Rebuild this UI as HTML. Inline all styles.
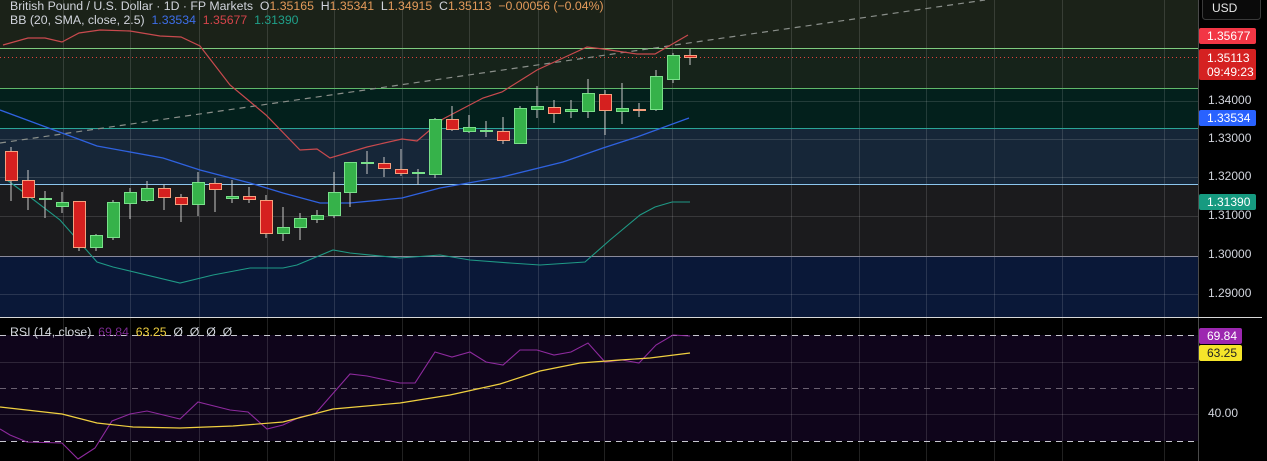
<!DOCTYPE html>
<html><head><meta charset="utf-8"><style>
html,body{margin:0;padding:0;background:#000;}
body{width:1267px;height:461px;overflow:hidden;position:relative;font-family:"Liberation Sans",sans-serif;}
svg{position:absolute;left:0;top:0;}
.lg{position:absolute;left:10px;font-size:12.3px;color:#d1d4dc;white-space:nowrap;}
.ax{position:absolute;left:1208px;font-size:12px;color:#d1d4dc;}
.bx{position:absolute;left:1199px;width:57px;font-size:12px;color:#fff;border-radius:2px;padding-left:8px;box-sizing:border-box;}
</style></head><body>
<svg width="1267" height="461" viewBox="0 0 1267 461">
<rect x="0" y="0" width="1198" height="48" fill="#1b2218"/>
<rect x="0" y="48" width="1198" height="40" fill="#16231a"/>
<rect x="0" y="88" width="1198" height="40" fill="#03201c"/>
<rect x="0" y="128" width="1198" height="56" fill="#162638"/>
<rect x="0" y="184" width="1198" height="72" fill="#1b1b1d"/>
<rect x="0" y="256" width="1198" height="61" fill="#0a1838"/>
<rect x="0" y="317" width="1198" height="144" fill="#000"/>
<rect x="0" y="335" width="1198" height="106" fill="#0f051b"/>
<g stroke="rgba(255,255,255,0.13)" stroke-width="1">
<path d="M63.5 0V461M130.5 0V461M199.5 0V461M267.5 0V461M334.5 0V461M402.5 0V461M469.5 0V461M538.5 0V461M604.5 0V461M672.5 0V461M791.5 0V461M859.5 0V461M926.5 0V461M994.5 0V461M1062.5 0V461M1164.5 0V461"/>
<path d="M0 101.5H1198M0 139.5H1198M0 177.5H1198M0 216.5H1198M0 294.5H1198M0 362.5H1198M0 414.5H1198"/>
</g>
<line x1="0" y1="48.5" x2="1198" y2="48.5" stroke="#7ecb7e"/>
<line x1="0" y1="88.5" x2="1198" y2="88.5" stroke="#5fb86a"/>
<line x1="0" y1="128.5" x2="1198" y2="128.5" stroke="#2aa597"/>
<line x1="0" y1="184.5" x2="1198" y2="184.5" stroke="#8cc6ee"/>
<line x1="0" y1="256.5" x2="1198" y2="256.5" stroke="#8a8a9a"/>
<line x1="0" y1="57.5" x2="1198" y2="57.5" stroke="#e0443a" stroke-dasharray="1 3"/>
<line x1="0" y1="143" x2="985" y2="0" stroke="#8a8f8a" stroke-dasharray="6 5" stroke-width="1.2"/>
<polyline fill="none" stroke="#c94a4e" stroke-width="1.2" points="3,45 28,38 45,38 62,42 79,33 100,30 130,31 160,36 181,37 200,46 230,85 266,115 300,150 317,149 330,158 367,147 402,139 417,141 443,119 483,98 502,92 537,70 563,58 587,47 603,49 637,54 655,54 688,35"/>
<polyline fill="none" stroke="#2f62e0" stroke-width="1.3" points="0,110 97,146 163,158 200,170 250,183 283,193 320,203 350,203 402,198 440,188 502,177 563,162 603,148 637,137 689,118"/>
<polyline fill="none" stroke="#1f9a86" stroke-width="1.1" points="7,180 30,197 60,220 97,262 113,267 180,283 213,275 250,268 283,268 297,265 333,250 350,253 400,258 440,255 470,260 510,263 540,265 585,262 610,240 640,215 655,207 672,202 690,202"/>
<g stroke-width="1">
<g stroke="#c8c8c8">
<path d="M11 147V201M28 170V210M45 191V218M62 192V213M79 201V251M96 234V251M113 200V240M130 188V219M147 181V202M164 184V210M181 194V222M198 172V216M215 178V212M232 180V203M249 187V203M266 195V238M283 207V241M300 213V240M317 210V223M334 172V218M350 162V207M367 151V174M384 157V177M401 149V176M418 169V185M435 118V178M452 106V131M469 115V133M486 121V137M503 117V144M520 106V143M537 86V118M554 100V123M571 100V118M588 79V118M605 90V135M622 83V124M639 103V117M656 70V111M673 53V83M690 49V65"/>
</g>
<g fill="#d5201f" stroke="#f6a07e">
<rect x="5.5" y="151.5" width="12" height="29"/>
<rect x="22.5" y="180.5" width="12" height="17"/>
<rect x="73.5" y="201.5" width="12" height="46"/>
<rect x="158.5" y="188.5" width="12" height="9"/>
<rect x="175.5" y="197.5" width="12" height="7"/>
<rect x="209.5" y="183.5" width="12" height="6"/>
<rect x="243.5" y="196.5" width="12" height="3"/>
<rect x="260.5" y="200.5" width="12" height="33"/>
<rect x="378.5" y="163.5" width="12" height="5"/>
<rect x="395.5" y="169.5" width="12" height="4"/>
<rect x="446.5" y="119.5" width="12" height="10"/>
<rect x="497.5" y="131.5" width="12" height="9"/>
<rect x="548.5" y="107.5" width="12" height="6"/>
<rect x="599.5" y="94.5" width="12" height="16"/>
<rect x="633.5" y="109.5" width="12" height="1"/>
<rect x="684.5" y="55.5" width="12" height="2"/>
</g>
<g fill="#36b24a" stroke="#7ae08a">
<rect x="39.5" y="198.5" width="12" height="1"/>
<rect x="56.5" y="202.5" width="12" height="4"/>
<rect x="90.5" y="235.5" width="12" height="12"/>
<rect x="107.5" y="202.5" width="12" height="35"/>
<rect x="124.5" y="192.5" width="12" height="11"/>
<rect x="141.5" y="188.5" width="12" height="12"/>
<rect x="192.5" y="182.5" width="12" height="22"/>
<rect x="226.5" y="196.5" width="12" height="2"/>
<rect x="277.5" y="227.5" width="12" height="6"/>
<rect x="294.5" y="218.5" width="12" height="9"/>
<rect x="311.5" y="215.5" width="12" height="4"/>
<rect x="328.5" y="192.5" width="12" height="23"/>
<rect x="344.5" y="162.5" width="12" height="30"/>
<rect x="361.5" y="162.5" width="12" height="1"/>
<rect x="412.5" y="172.5" width="12" height="1"/>
<rect x="429.5" y="119.5" width="12" height="55"/>
<rect x="463.5" y="127.5" width="12" height="4"/>
<rect x="480.5" y="130.5" width="12" height="1"/>
<rect x="514.5" y="108.5" width="12" height="35"/>
<rect x="531.5" y="106.5" width="12" height="3"/>
<rect x="565.5" y="109.5" width="12" height="2"/>
<rect x="582.5" y="93.5" width="12" height="18"/>
<rect x="616.5" y="108.5" width="12" height="3"/>
<rect x="650.5" y="76.5" width="12" height="33"/>
<rect x="667.5" y="55.5" width="12" height="24"/>
</g>
</g>
<g stroke="#c8c8d0" stroke-dasharray="6 5" stroke-width="1">
<line x1="0" y1="335.5" x2="1198" y2="335.5"/>
<line x1="0" y1="441.5" x2="1198" y2="441.5"/>
</g>
<line x1="0" y1="388.5" x2="1198" y2="388.5" stroke="#6a6070" stroke-dasharray="6 5"/>
<polyline fill="none" stroke="#8e2a9e" stroke-width="1.1" points="0,429 10,435 27,442 62,443 78,459 95,448 112,421 130,414 147,411 180,419 198,402 230,410 248,412 267,429 283,425 300,417 315,414 350,374 367,376 400,383 415,383 435,352 452,357 470,352 486,362 503,365 520,350 537,350 554,355 571,352 588,343 605,362 622,360 639,363 656,345 673,335 690,336"/>
<polyline fill="none" stroke="#f0d040" stroke-width="1.2" points="0,407 62,414 97,423 133,427 180,428 233,426 283,422 333,409 400,403 450,395 500,384 540,371 580,363 620,360 650,358 690,353"/>
<rect x="1199" y="0" width="68" height="461" fill="#000"/>
<line x1="1198.5" y1="0" x2="1198.5" y2="461" stroke="#4a4a4a"/>
<line x1="0" y1="317.5" x2="1262" y2="317.5" stroke="#d8d8d8"/>
<rect x="1202.5" y="-3.5" width="58" height="23" rx="3" fill="#0a0a0a" stroke="#3a3a3a"/>
</svg>
<div class="lg" style="top:-1px">British Pound / U.S. Dollar · 1D · FP Markets&nbsp; O<span style="color:#e39a5a">1.35165</span>&nbsp; H<span style="color:#e39a5a">1.35341</span>&nbsp; L<span style="color:#e39a5a">1.34915</span>&nbsp; C<span style="color:#e39a5a">1.35113</span>&nbsp; <span style="color:#e39a5a">−0.00056 (−0.04%)</span></div>
<div class="lg" style="top:13px">BB (20, SMA, close, 2.5)&nbsp; <span style="color:#3d6ee8">1.33534</span>&nbsp; <span style="color:#d4444a">1.35677</span>&nbsp; <span style="color:#1fa08a">1.31390</span></div>
<div class="lg" style="top:325px">RSI (14, close)&nbsp; <span style="color:#7a2a90">69.84</span>&nbsp; <span style="color:#f0d040">63.25</span>&nbsp; Ø&nbsp; Ø&nbsp; Ø&nbsp; Ø</div>
<div class="ax" style="top:1px;left:1212px;color:#e8e8e8">USD</div>
<div class="bx" style="top:28px;height:16px;line-height:16px;background:#f23645">1.35677</div>
<div class="bx" style="top:49px;height:31px;line-height:14px;padding-top:2px;background:#d52121">1.35113<br>09:49:23</div>
<div class="ax" style="top:93px">1.34000</div>
<div class="bx" style="top:110px;height:16px;line-height:16px;background:#2962ff">1.33534</div>
<div class="ax" style="top:131px">1.33000</div>
<div class="ax" style="top:169px">1.32000</div>
<div class="bx" style="top:194px;height:16px;line-height:16px;background:#169a80">1.31390</div>
<div class="ax" style="top:208px">1.31000</div>
<div class="ax" style="top:247px">1.30000</div>
<div class="ax" style="top:286px">1.29000</div>
<div class="bx" style="top:328px;height:16px;line-height:16px;background:#9c27b0;width:43px">69.84</div>
<div class="bx" style="top:345px;height:16px;line-height:16px;background:#f5e52a;color:#222;width:43px">63.25</div>
<div class="ax" style="top:406px">40.00</div>
</body></html>
